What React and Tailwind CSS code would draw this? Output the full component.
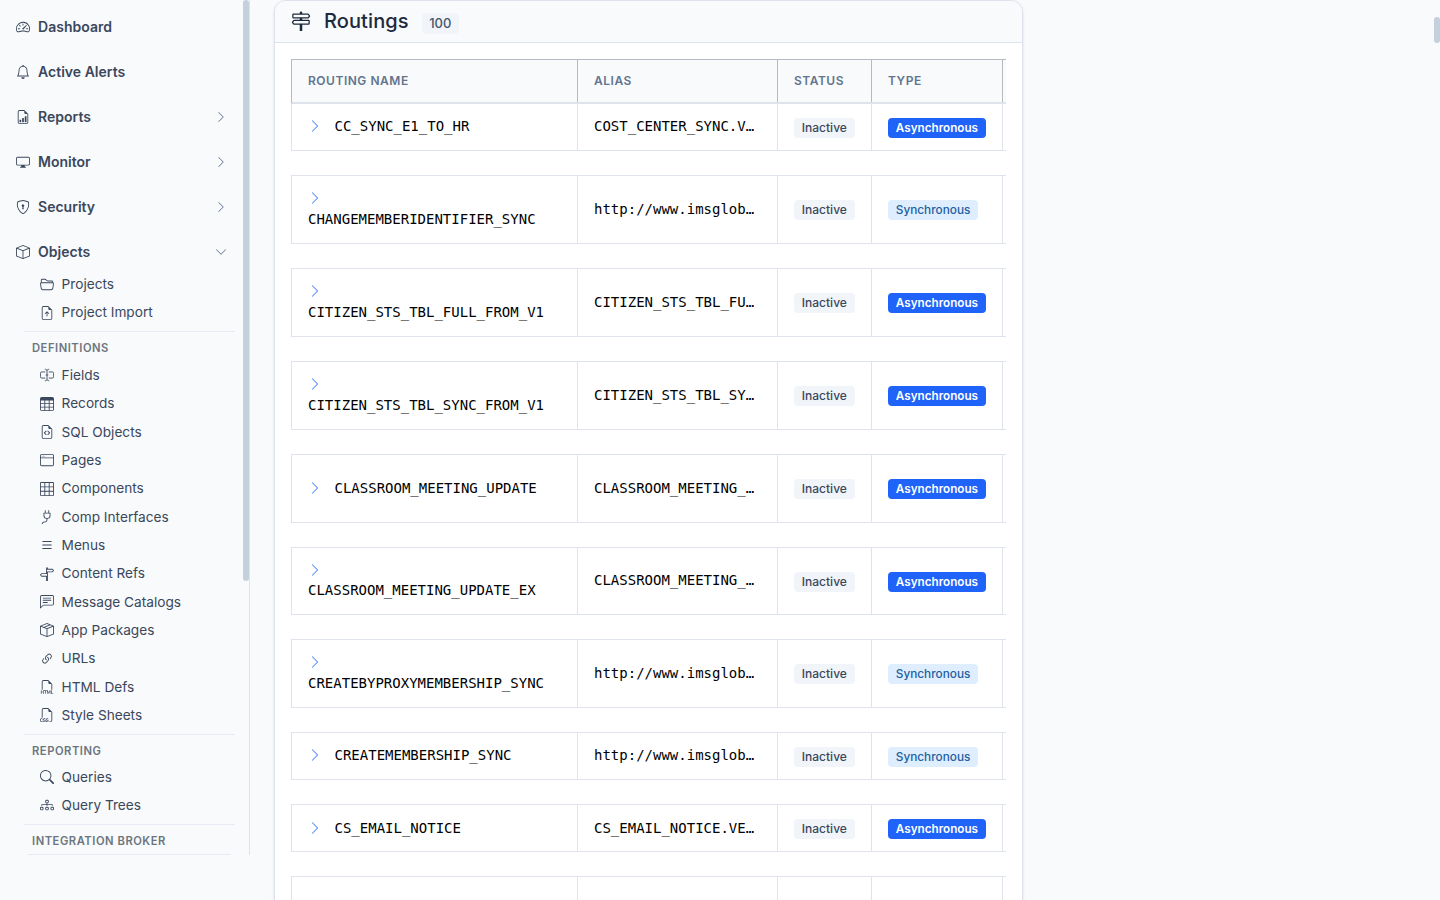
import clsx from "clsx";
import {
  BsBell,
  BsBox,
  BsBoxSeam,
  BsChatLeftText,
  BsChevronDown,
  BsChevronRight,
  BsDiagram3,
  BsDisplay,
  BsFileEarmarkArrowUp,
  BsFileEarmarkBarGraph,
  BsFileEarmarkCode,
  BsFiletypeCss,
  BsFiletypeHtml,
  BsFolder2Open,
  BsGrid3X3,
  BsInputCursor,
  BsLink45Deg,
  BsList,
  BsPlug,
  BsSearch,
  BsShieldLock,
  BsSignpost2,
  BsSignpostSplit,
  BsSpeedometer2,
  BsTable,
  BsWindow,
} from "react-icons/bs";

const mainItems = [
  { label: "Dashboard", icon: BsSpeedometer2 },
  { label: "Active Alerts", icon: BsBell },
  { label: "Reports", icon: BsFileEarmarkBarGraph, arrow: BsChevronRight },
  { label: "Monitor", icon: BsDisplay, arrow: BsChevronRight },
  { label: "Security", icon: BsShieldLock, arrow: BsChevronRight },
  { label: "Objects", icon: BsBox, arrow: BsChevronDown },
];

const projectItems = [
  { label: "Projects", icon: BsFolder2Open },
  { label: "Project Import", icon: BsFileEarmarkArrowUp },
];

const definitionItems = [
  { label: "Fields", icon: InputCursorIcon },
  { label: "Records", icon: BsTable },
  { label: "SQL Objects", icon: BsFileEarmarkCode },
  { label: "Pages", icon: BsWindow },
  { label: "Components", icon: BsGrid3X3 },
  { label: "Comp Interfaces", icon: BsPlug },
  { label: "Menus", icon: BsList },
  { label: "Content Refs", icon: BsSignpostSplit },
  { label: "Message Catalogs", icon: BsChatLeftText },
  { label: "App Packages", icon: BsBoxSeam },
  { label: "URLs", icon: BsLink45Deg },
  { label: "HTML Defs", icon: BsFiletypeHtml },
  { label: "Style Sheets", icon: BsFiletypeCss },
];

const reportingItems = [
  { label: "Queries", icon: BsSearch },
  { label: "Query Trees", icon: BsDiagram3 },
];

const routings = [
  { name: "CC_SYNC_E1_TO_HR", alias: "COST_CENTER_SYNC.V…", type: "Asynchronous", height: "h-[47px]", first: true },
  { name: "CHANGEMEMBERIDENTIFIER_SYNC", alias: "http://www.imsglob…", type: "Synchronous", height: "h-[69px]", wrap: true },
  { name: "CITIZEN_STS_TBL_FULL_FROM_V1", alias: "CITIZEN_STS_TBL_FU…", type: "Asynchronous", height: "h-[69px]", wrap: true },
  { name: "CITIZEN_STS_TBL_SYNC_FROM_V1", alias: "CITIZEN_STS_TBL_SY…", type: "Asynchronous", height: "h-[69px]", wrap: true },
  { name: "CLASSROOM_MEETING_UPDATE", alias: "CLASSROOM_MEETING_…", type: "Asynchronous", height: "h-[69px]" },
  { name: "CLASSROOM_MEETING_UPDATE_EX", alias: "CLASSROOM_MEETING_…", type: "Asynchronous", height: "h-[68px]", wrap: true },
  { name: "CREATEBYPROXYMEMBERSHIP_SYNC", alias: "http://www.imsglob…", type: "Synchronous", height: "h-[69px]", wrap: true },
  { name: "CREATEMEMBERSHIP_SYNC", alias: "http://www.imsglob…", type: "Synchronous", height: "h-[48px]" },
  { name: "CS_EMAIL_NOTICE", alias: "CS_EMAIL_NOTICE.VE…", type: "Asynchronous", height: "h-[48px]", last: true },
];

const columns = "grid grid-cols-[286px_200px_94px_131px_4px]";

// Text cursor centred between the two halves of a field
function InputCursorIcon({ className }) {
  return (
    <svg viewBox="0 0 16 16" fill="none" stroke="currentColor" className={className}>
      <path d="M6 4.5H2a1.5 1.5 0 0 0-1.5 1.5v4A1.5 1.5 0 0 0 2 11.5h4M10 4.5h4A1.5 1.5 0 0 1 15.5 6v4a1.5 1.5 0 0 1-1.5 1.5h-4" />
      <path d="M5.5 1.5C7 1.5 8 2 8 3v10c0 1-1 1.5-2.5 1.5M10.5 1.5C9 1.5 8 2 8 3M8 13c0 1 1 1.5 2.5 1.5M6.5 8h3" />
    </svg>
  );
}

function SubItem({ label, icon: Icon }) {
  return (
    <a className="flex h-[28.35px] items-center gap-[7.8px] pl-[39.8px] text-[13.65px] text-[#3b475b]">
      <Icon className="h-3.5 w-3.5 shrink-0" />
      {label}
    </a>
  );
}

function SectionTitle({ children, className }) {
  return (
    <div className={clsx("ml-6 mr-0.5 mt-[4.3px] flex items-center border-t border-[#e6eaf4] pl-2 text-[11.2px] font-semibold tracking-[0.54px] text-[#6c757d]", className)}>
      {children}
    </div>
  );
}

function Sidebar() {
  return (
    <aside className="relative h-[855px] w-[250px] shrink-0 overflow-hidden border-r border-[#dee2eb] pt-2">
      <nav className="w-[237px]">
        <div className="flex flex-col gap-2">
          {mainItems.map(({ label, icon: Icon, arrow: Arrow }) => (
            <a key={label} className="flex h-[37px] items-center gap-2 pl-4 pr-2.5 text-sm font-semibold tracking-[0.02px] text-[#3b475b]">
              <Icon className="h-3.5 w-3.5 shrink-0" />
              <span className="flex-1">{label}</span>
              {Arrow && <Arrow className="h-3 w-3 text-slate-500" />}
            </a>
          ))}
        </div>

        {projectItems.map((item) => <SubItem key={item.label} {...item} />)}

        <SectionTitle className="h-[30px] pt-[4px]">DEFINITIONS</SectionTitle>
        {definitionItems.map((item) => <SubItem key={item.label} {...item} />)}

        <SectionTitle className="h-[29px] pt-[5px]">REPORTING</SectionTitle>
        {reportingItems.map((item) => <SubItem key={item.label} {...item} />)}

        <SectionTitle className="h-[30px] pt-[5px]">INTEGRATION BROKER</SectionTitle>
        <div className="ml-7 w-[203px] border-t border-[#e6eaf4]" />
      </nav>

      {/* Scrollbar thumb */}
      <div className="absolute right-0 top-0 h-[581px] w-1.5 rounded-full bg-[#c5d0dd]" />
    </aside>
  );
}

function Badge({ children, className }) {
  return (
    <span className={clsx("inline-flex h-5 items-center rounded px-[7.8px] leading-4", className)}>
      {children}
    </span>
  );
}

function RoutingRow({ name, alias, type, height, first, last, wrap }) {
  const tall = height === "h-[69px]";
  return (
    <div
      className={clsx(
        columns,
        height,
        "mb-6 border-b border-l border-[#dfe3ec] font-['DejaVu_Sans_Mono',monospace] text-sm leading-[21px] text-black [&>div]:border-r [&>div]:border-[#dfe3ec] [&>div:last-child]:border-r-0",
        !first && "border-t"
      )}
    >
      <div className={clsx("flex pl-4", wrap ? "flex-col justify-center" : "items-center", !last && (tall && !wrap ? "pb-px" : "pb-[2px]"))}>
        <span className={clsx("flex w-[26.5px] shrink-0 items-center", wrap && "h-[21px]")}>
          <BsChevronRight className="h-3.5 w-3.5 text-[#3b7cf6]" />
        </span>
        <span>{name}</span>
      </div>
      <div className={clsx("flex items-center pl-4", !last && (tall ? "pb-px" : "pb-[2px]"))}>
        <span className="whitespace-nowrap">{alias}</span>
      </div>
      <div className={clsx("flex items-center pl-4 font-['Inter',sans-serif]", !tall && "pt-0.5")}>
        <Badge className="bg-slate-100 text-xs font-medium text-[#3b475b]">Inactive</Badge>
      </div>
      <div className={clsx("flex items-center pl-4 font-['Inter',sans-serif]", !tall && "pt-0.5")}>
        {type === "Asynchronous" ? (
          <Badge className="bg-[#1f63f8] text-[11.7px] font-semibold text-white">Asynchronous</Badge>
        ) : (
          <Badge className="bg-[#dfeeff] text-[11.8px] font-medium text-[#22609f]">Synchronous</Badge>
        )}
      </div>
      <div />
    </div>
  );
}

function App() {
  return (
    <div className="relative flex h-[900px] overflow-hidden bg-slate-50 font-['Inter',sans-serif]">
      <Sidebar />

      <main className="ml-6 w-[749px]">
        <section className="h-[920px] overflow-hidden rounded-xl border border-[#dee2eb] bg-white shadow-sm">
          <header className="flex h-[42px] items-center border-b border-[#dee2eb] bg-slate-50 pl-4">
            <BsSignpost2 className="mb-[2px] h-5 w-5 text-slate-800" />
            <h2 className="mb-[2px] ml-[13px] text-xl font-medium tracking-[0.1px] text-slate-800">Routings</h2>
            <span className="ml-[13px] mt-1 flex h-[21px] items-center rounded bg-slate-100 px-[7.5px] text-[13px] font-medium text-slate-600">100</span>
          </header>

          <div className="ml-4 mt-4 w-[715px] overflow-hidden">
            <div
              className={clsx(
                columns,
                "h-[45px] border-b-2 border-l border-t border-b-[#dfe3ec] border-l-[#b5b9c0] border-t-[#b5b9c0] bg-slate-50 text-xs font-semibold tracking-[0.52px] text-slate-500 [&>div]:flex [&>div]:items-center [&>div]:border-r [&>div]:border-[#b5b9c0] [&>div]:pl-4 [&>div:last-child]:border-r-0 [&>div:last-child]:pl-0"
              )}
            >
              <div>ROUTING NAME</div>
              <div>ALIAS</div>
              <div>STATUS</div>
              <div>TYPE</div>
              <div />
            </div>

            {routings.map((routing) => <RoutingRow key={routing.name} {...routing} />)}

            {/* Next row, cut off by the window */}
            <div className={clsx(columns, "h-12 border-l border-t border-[#dfe3ec] [&>div]:border-r [&>div]:border-[#dfe3ec] [&>div:last-child]:border-r-0")}>
              <div />
              <div />
              <div />
              <div />
              <div />
            </div>
          </div>
        </section>
      </main>

      {/* Page scrollbar thumb */}
      <div className="absolute right-0 top-[17px] h-[26px] w-1.5 rounded-full bg-[#c5d0dd]" />
    </div>
  );
}

export default App;
